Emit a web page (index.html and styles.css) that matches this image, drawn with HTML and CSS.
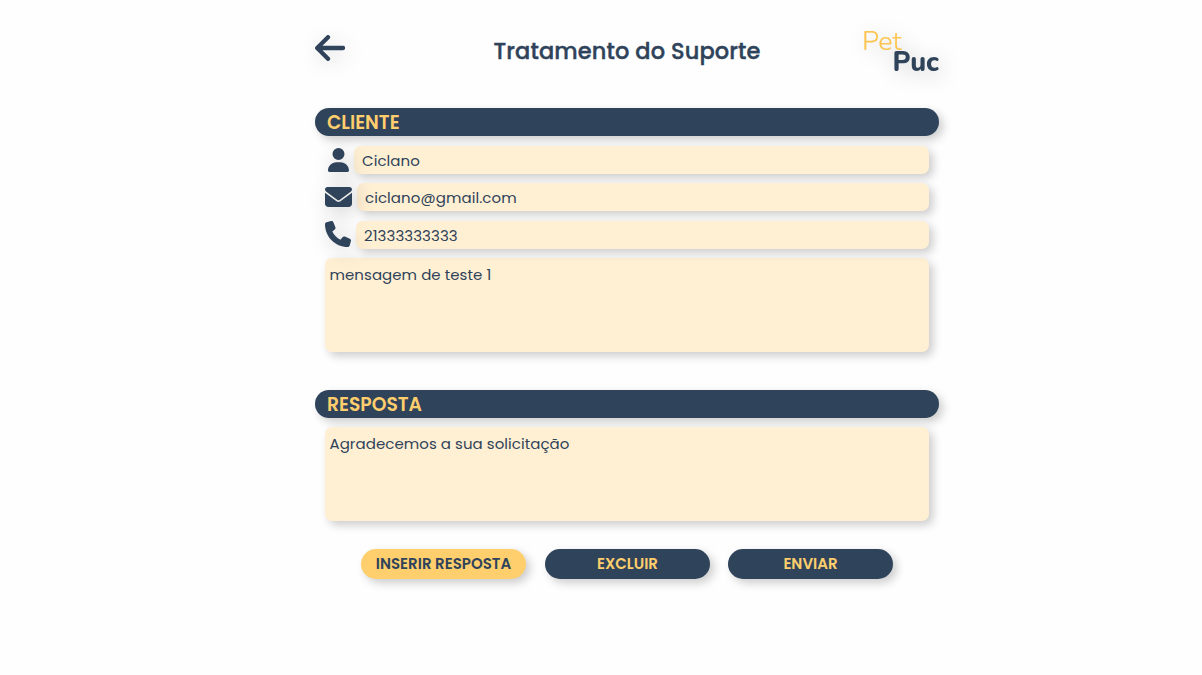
FILE: index.html
```html
<!DOCTYPE html>
<html lang="pt-BR">
<head>
<meta charset="utf-8">
<title>Tratamento do Suporte</title>
<link rel="stylesheet" href="styles.css">
</head>
<body>
<main class="page">
  <header class="header">
    <svg class="back" viewBox="0 0 30 26"><path d="M13 2.200 2.200 13 13 23.800M2.500 13H28" fill="none" stroke="currentColor" stroke-width="4.300" stroke-linecap="round" stroke-linejoin="round"/></svg>
    <h1 class="title">Tratamento do Suporte</h1>
    <div class="logo"><span class="logo-pet">Pet</span><span class="logo-puc">Puc</span></div>
  </header>
  <section class="client">
    <h2 class="bar">CLIENTE</h2>
    <div class="fields">
      <div class="row">
        <svg class="icon user" viewBox="0 0 448 512"><path fill="currentColor" d="M224 256a128 128 0 1 0 0-256 128 128 0 1 0 0 256zm-45.700 48C79.800 304 0 383.800 0 482.300 0 498.700 13.300 512 29.700 512h388.600c16.400 0 29.700-13.300 29.700-29.700C448 383.800 368.200 304 269.700 304z"/></svg>
        <div class="field">Ciclano</div>
      </div>
      <div class="row">
        <svg class="icon mail" viewBox="0 64 512 384" preserveAspectRatio="none"><path fill="currentColor" d="M48 64C21.500 64 0 85.500 0 112c0 15.100 7.100 29.300 19.200 38.400l217.600 163.200c11.400 8.500 27 8.500 38.400 0l217.600-163.200c12.100-9.100 19.200-23.300 19.200-38.400 0-26.500-21.500-48-48-48zM0 176v208c0 35.300 28.700 64 64 64h384c35.300 0 64-28.700 64-64V176L294.400 339.200c-22.800 17.100-54 17.100-76.800 0z"/></svg>
        <div class="field">ciclano@gmail.com</div>
      </div>
      <div class="row">
        <svg class="icon phone" viewBox="0 0 512 512"><path fill="currentColor" d="M164.900 24.600c-7.700-18.600-28-28.500-47.400-23.200l-88 24C12.100 30.200 0 46 0 64c0 247.400 200.600 448 448 448 18 0 33.800-12.100 38.600-29.500l24-88c5.300-19.400-4.600-39.700-23.200-47.400l-96-40c-16.300-6.800-35.200-2.100-46.300 11.600L304.700 368C234.300 334.700 177.300 277.700 144 207.300l49.300-40.300c13.700-11.200 18.400-30 11.600-46.300z"/></svg>
        <div class="field">21333333333</div>
      </div>
      <div class="area">mensagem de teste 1</div>
    </div>
  </section>
  <section class="answer">
    <h2 class="bar">RESPOSTA</h2>
    <div class="area reply">Agradecemos a sua solicitação</div>
  </section>
  <div class="actions">
    <button class="btn yellow">INSERIR RESPOSTA</button>
    <button class="btn">EXCLUIR</button>
    <button class="btn">ENVIAR</button>
  </div>
</main>
</body>
</html>
```
FILE: styles.css
```css
* { box-sizing: border-box; }
body {
  margin: 0;
  min-height: 100vh;
  background: #fefefe;
  color: #2f435a;
  font-family: Poppins, Inter, "Open Sans", sans-serif;
}
svg { display: block; flex: none; }
.page { width: 624px; min-height: 100vh; margin-left: 315px; }
.header { height: 108px; padding-top: 28px; display: flex; justify-content: space-between; align-items: flex-start; }
.back { width: 30px; height: 26px; margin-top: 7px; filter: drop-shadow(4px 4px 10px rgba(0,0,0,.15)); }
.title { margin: 6px 0 0 47px; font-size: 22.500px; line-height: 34px; font-weight: 500; letter-spacing: .1px; -webkit-text-stroke: .4px currentColor; white-space: nowrap; }
.logo { width: 77px; height: 49px; display: flex; flex-direction: column; font-family: Nunito, "Open Sans", sans-serif; font-size: 27px; line-height: 20.500px; filter: drop-shadow(4px 4px 10px rgba(0,0,0,.2)); padding-top: 4px; }
.logo-pet { color: #fcc44f; font-weight: 300; -webkit-text-stroke: .2px currentColor; }
.logo-puc { align-self: flex-end; font-weight: 800; }
.bar { margin: 0; height: 28px; padding-left: 12px; border-radius: 14px; background: #2f435a; color: #ffce6d; font-size: 18.720px; line-height: 29px; font-weight: 600; box-shadow: 4px 4px 10px rgba(0,0,0,.2); }
.fields { padding: 10px 10px 0; }
.row { height: 28px; margin-bottom: 9px; display: flex; align-items: center; }
.row:nth-child(2) { margin-bottom: 10px; }
.icon { filter: drop-shadow(4px 4px 10px rgba(0,0,0,.2)); }
.user { width: 21px; height: 24px; margin: 0 5.500px 0 2.500px; }
.mail { width: 27px; height: 20px; margin-right: 5px; }
.phone { width: 26px; height: 26px; margin: -2px 5px 0 0; }
.field { flex: 1; height: 28px; padding-left: 8px; border-radius: 7px; background: #ffefd3; box-shadow: 4px 4px 10px rgba(0,0,0,.2); font-size: 15px; letter-spacing: .07px; line-height: 29px; }
.area { height: 94px; padding: 5px 4.500px; border-radius: 7px; background: #ffefd3; box-shadow: 4px 4px 10px rgba(0,0,0,.2); font-size: 15px; letter-spacing: .05px; line-height: 23px; }
.answer { margin-top: 38px; }
.reply { margin: 9px 10px 0; }
.actions { display: flex; padding-left: 46px; gap: 18px; margin-top: 28px; }
.btn { width: 165px; height: 30px; padding: 0; border: 0; border-radius: 15px; background: #2f435a; color: #ffce6d; font: inherit; font-size: 15px; line-height: 30px; font-weight: 600; box-shadow: 4px 4px 10px rgba(0,0,0,.2); white-space: nowrap; }
.yellow { margin-right: 1px; background: #ffce6d; color: #2f435a; }
```
